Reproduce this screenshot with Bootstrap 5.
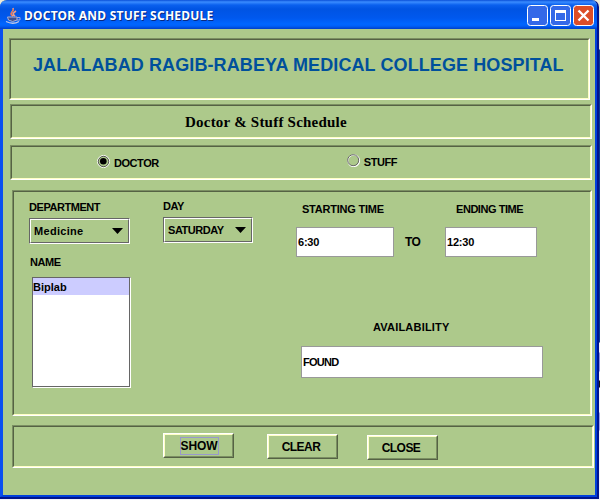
<!DOCTYPE html>
<html lang="en">
<head>
<meta charset="utf-8">
<title>Doctor and Stuff Schedule</title>
<link href="https://cdn.jsdelivr.net/npm/bootstrap@5.3.0/dist/css/bootstrap.min.css" rel="stylesheet">
<style>
body{width:600px;height:500px;overflow:hidden;background:linear-gradient(#ece9d8 0 49px,#0a3a90 50px 342px,#f4f4fc 343px 352px,#8c90e0 353px 371px,#f4f4fc 372px 380px,#111 381px 387px,#f4f4fc 388px 412px,#a0a4e8 413px 430px,#f4f4fc 431px);font:bold 11px/14px "Liberation Sans",Arial,sans-serif;color:#000}
.frame{width:599px;height:499px;border:solid #00148c;border-width:0 2px 2px 0;border-radius:7px 7px 0 0;overflow:hidden;background:#00148c}
.win{height:497px;background:#adc98b;border:solid #0040dc;border-width:0 2px 2px 3px;border-left-color:#0a4ff0}
.titlebar{height:29px;margin:0 -2px 0 -3px;padding:2px 3px 0 5px;background:linear-gradient(#0a4fd8 0,#3a8cff 2px,#0a60ee 5px,#0054e3 9px,#0058ee 18px,#0066ff 24px,#0060f8 26px,#003fc8 29px)}
.caption{font:bold 12px/16px "Noto Sans","Open Sans",sans-serif;color:#fff;text-shadow:1px 1px #0a2a80;white-space:nowrap;letter-spacing:.24px;margin:1px 0 0 1px}
.wbtns{gap:2px}
.wbtn{width:21px;height:21px;display:block}
.etched{border:1px solid;border-color:#7b8f62 #fff #fff #7b8f62}
.etched>.inner{height:100%;border:1px solid;border-color:#556244 #ffffc6 #ffffc6 #556244}
.p1{margin:9px 5px 0 6px;height:62px}
.p2{margin:4px 3px 0 7px;height:35px}
.p3{margin:6px 3px 0 7px;height:35px}
.p4{margin:10px 3px 0 9px;height:226px}
.p5{margin:9px 1px 0 9px;height:43px}
.heading{font-size:18px;line-height:20px;color:#00509c;padding:15px 0 0 22px;white-space:nowrap;letter-spacing:.1px}
.subhead{font:bold 15px/18px "Liberation Serif",serif;padding:7px 0 0 173px;white-space:nowrap;letter-spacing:.22px}
.radio-item{gap:4px}
.radio-item svg{width:13px;height:13px;display:block}
.radio-item span{padding-top:1px}
.opt-doctor{margin:8px 0 0 85px}
.opt-stuff{margin:7px 0 0 188px}
.k4{letter-spacing:-.45px}
.k2{letter-spacing:-.22px}
.k7{letter-spacing:-.75px}
.kb{letter-spacing:-.55px}
.kp{letter-spacing:.3px}
.ka{letter-spacing:.2px}
.combo{height:26px;border:1px solid;border-color:#666 #fff #fff #666}
.combo>div{height:100%;border:1px solid;border-color:#fff #666 #666 #fff;padding:0 5px 0 3px}
.combo svg{width:11px;height:6px}
.name-label{margin:11px 0 8px 1px}
.listbox{height:111px;width:99px;margin-left:3px;border:1px solid;border-color:#666 #fff #fff #666}
.listbox>div{height:100%;border:solid #666;border-width:0 1px 1px 0;background:#fff}
.sel{height:17px;line-height:19px;background:#ccf}
.field{background:#fff;border:1px solid #999;height:30px;line-height:29px;padding-left:1px}
.bevel{width:71px;height:25px;padding:0;background:none;border:1px solid;border-color:#fff #556244 #556244 #fff;border-radius:0;color:#000}
.bevel>span{height:100%;padding-right:3px;border:1px solid;border-color:#ffffc6 #7b8f62 #7b8f62 #ffffc6;font:bold 12px/14px "Liberation Sans",Arial,sans-serif}
.bevel>.has-focus{padding:0 0 0 1px}
.focused{width:39px;height:18px;line-height:17px;border:1px solid #99c;letter-spacing:-.1px}
.b-show{margin-top:6px}
.b-clear{margin:7px 0 0 33px}
.b-close{margin:8px 0 0 29px}
.dept{width:101px;margin-left:15px;padding-top:8px}
.day{width:90px;margin-left:33px;padding-top:7px}
.times{width:247px;margin-left:43px;padding-top:10px}
.start-l{width:153px;padding-left:6px}
.end-l{padding-left:7px}
.time-row{margin-top:11px}
.start-f{width:98px}
.end-f{width:92px}
.to{width:51px;padding-left:11px;font-size:12px;letter-spacing:-.5px}
.avail-l{margin:63px 0 0 77px}
.avail-f{width:242px;height:32px;line-height:31px;margin:12px 0 0 5px}
.p5 .inner{padding-left:149px}
</style>
<script src="https://cdn.jsdelivr.net/npm/bootstrap@5.3.0/dist/js/bootstrap.bundle.min.js"></script>
</head>
<body>
<div class="frame">
<main class="win">
<header class="titlebar d-flex align-items-center">
 <svg width="18" height="18" viewBox="0 0 18 18" fill="none"><path d="M8 9C3 6 10 5 8 1M10 9C7 7 8 6 11 4" stroke="#f4a080" stroke-width="1.6"/><path d="M7 9C4 6 9 5 8 2" stroke="#d84a30" stroke-width=".7"/><path d="M2.500 10h9.500v3q-4.500 3-8.500 0z" stroke="#a8b0d8" fill="#40508c"/><path d="M12 10.500h3v2.500h-3" stroke="#a8a8d0"/><path d="M1 14.500q7 3.500 13 0" stroke="#c0c8e8" stroke-width="1.300"/></svg>
 <span class="caption">DOCTOR AND STUFF SCHEDULE</span>
 <div class="wbtns d-flex ms-auto">
  <svg class="wbtn" viewBox="0 0 21 21"><rect x=".5" y=".5" width="20" height="20" rx="3" fill="#3469e8" stroke="#fff"/><path d="M5 13h7v3H5z" fill="#fff"/></svg>
  <svg class="wbtn" viewBox="0 0 21 21"><rect x=".5" y=".5" width="20" height="20" rx="3" fill="#3469e8" stroke="#fff"/><path d="M5 5h11v11H5zM6 8v7h9V8z" fill="#fff" fill-rule="evenodd"/></svg>
  <svg class="wbtn" viewBox="0 0 21 21"><rect x=".5" y=".5" width="20" height="20" rx="3" fill="#dc4e28" stroke="#fff"/><path d="M5.500 5.500l10 10m0-10l-10 10" stroke="#fff" stroke-width="2.400"/></svg>
 </div>
</header>
<section class="etched p1"><div class="inner"><h1 class="heading m-0 fw-bold">JALALABAD RAGIB-RABEYA MEDICAL COLLEGE HOSPITAL</h1></div></section>
<section class="etched p2"><div class="inner"><h2 class="subhead m-0">Doctor &amp; Stuff Schedule</h2></div></section>
<section class="etched p3"><div class="inner d-flex align-items-start">
 <div class="radio-item opt-doctor d-flex k4"><svg viewBox="0 0 13 13"><circle cx="6.500" cy="6.500" r="6" fill="none" stroke="#fff"/><circle cx="6.500" cy="6.500" r="5.200" fill="none" stroke="#555" stroke-width="1"/><circle cx="6.300" cy="6.300" r="3.300"/></svg><span>DOCTOR</span></div>
 <div class="radio-item opt-stuff d-flex k4"><svg viewBox="0 0 13 13"><circle cx="6.700" cy="6.700" r="5.800" fill="none" stroke="#fff" stroke-width="1.200"/><circle cx="6.200" cy="6.200" r="5.500" fill="none" stroke="#666" stroke-width="1"/></svg><span>STUFF</span></div>
</div></section>
<section class="etched p4"><div class="inner d-flex align-items-start">
 <div class="dept">
  <div class="k4">DEPARTMENT</div>
  <div class="combo mt-1"><div class="d-flex align-items-center justify-content-between"><span class="kp">Medicine</span><svg viewBox="0 0 11 6"><path d="M0 0h11L5.500 6z"/></svg></div></div>
  <div class="name-label k4">NAME</div>
  <div class="listbox"><div><div class="sel">Biplab</div></div></div>
 </div>
 <div class="day">
  <div class="k4">DAY</div>
  <div class="combo mt-1"><div class="d-flex align-items-center justify-content-between"><span class="k4">SATURDAY</span><svg viewBox="0 0 11 6"><path d="M0 0h11L5.500 6z"/></svg></div></div>
 </div>
 <div class="times">
  <div class="d-flex"><span class="start-l k2">STARTING TIME</span><span class="end-l k4">ENDING TIME</span></div>
  <div class="time-row d-flex align-items-center"><div class="field start-f k2">6:30</div><div class="to">TO</div><div class="field end-f k2">12:30</div></div>
  <div class="avail-l ka">AVAILABILITY</div>
  <div class="field avail-f k7">FOUND</div>
 </div>
</div></section>
<section class="etched p5"><div class="inner d-flex align-items-start">
 <button class="btn bevel b-show d-block"><span class="has-focus d-flex align-items-center justify-content-center"><span class="focused">SHOW</span></span></button>
 <button class="btn bevel b-clear d-block"><span class="d-flex align-items-center justify-content-center kb">CLEAR</span></button>
 <button class="btn bevel b-close d-block"><span class="d-flex align-items-center justify-content-center kb">CLOSE</span></button>
</div></section>
</main>
</div>
</body>
</html>
